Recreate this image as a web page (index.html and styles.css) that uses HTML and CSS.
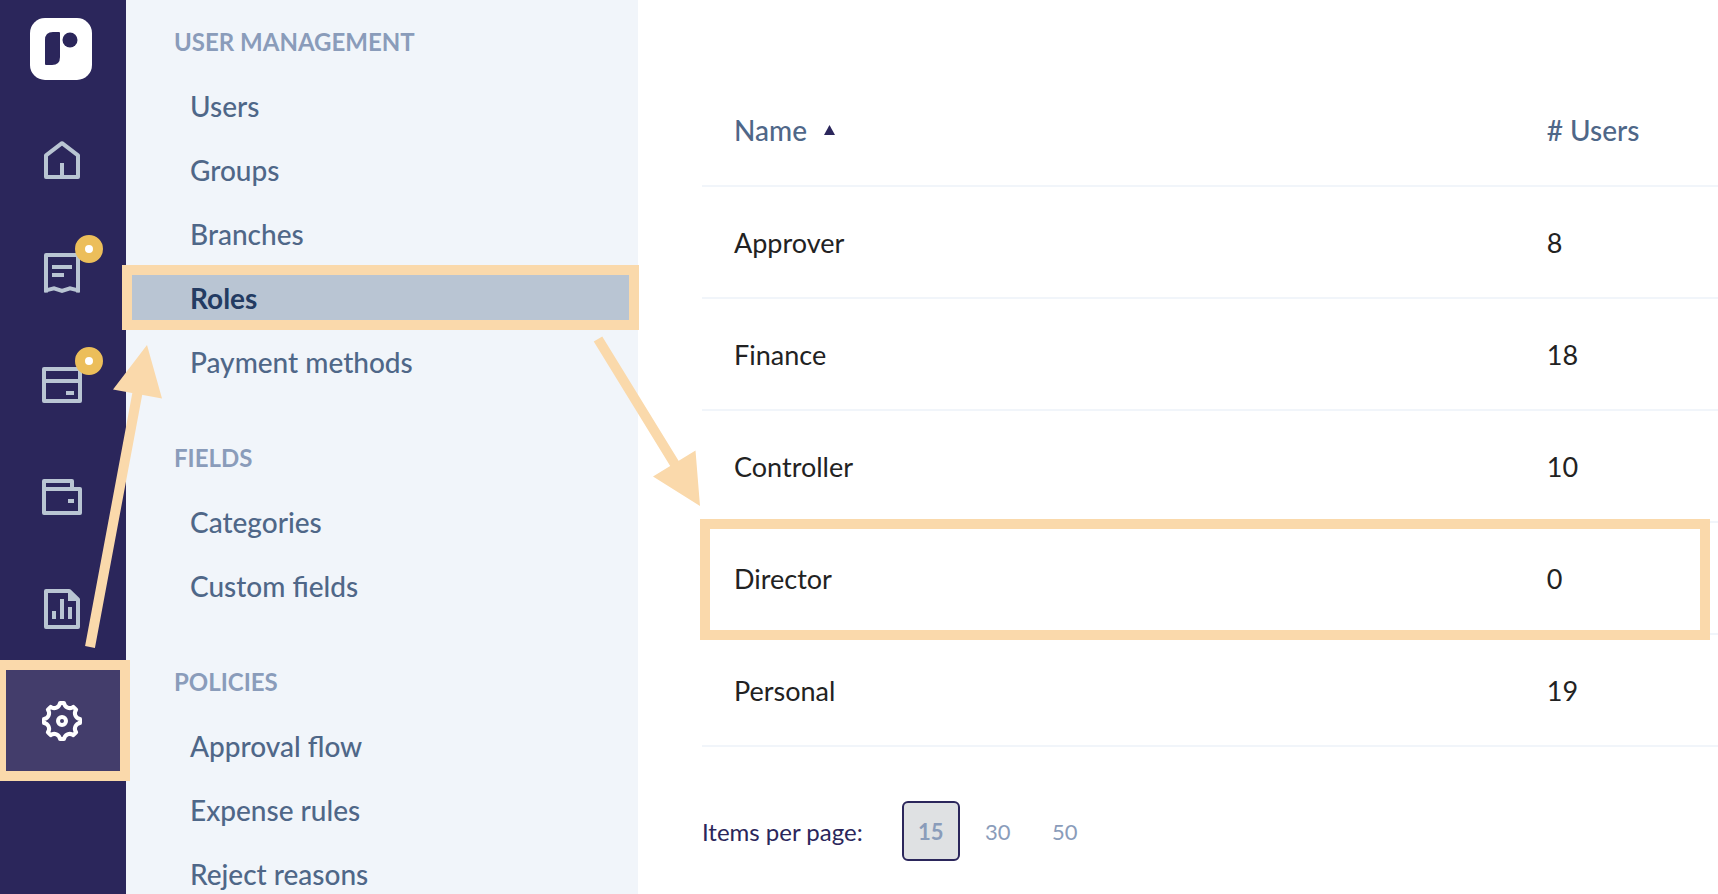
FILE: index.html
```html
<!DOCTYPE html>
<html lang="en">
<head>
  <meta charset="UTF-8" />
  <meta name="viewport" content="width=device-width, initial-scale=1.0" />
  <title>Roles</title>
  <link rel="stylesheet" href="styles.css">
</head>
<body>
  <nav class="rail" aria-label="Main">
    <a class="logo" href="#" aria-label="Home page">
      <svg width="62" height="62" viewBox="0 0 62 62">
        <rect width="62" height="62" rx="15" fill="#fff"/>
        <path d="M23 14h6q1 0 1 1v24q0 8-8 8h-6q-1 0-1-1V22q0-8 8-8z" fill="#2b265b"/>
        <circle cx="40" cy="22" r="7.5" fill="#2b265b"/>
      </svg>
    </a>
    <a class="rail-link" href="#" aria-label="Home">
      <svg class="icon" viewBox="0 0 24 24">
        <path d="M4 9.2L12 3.1l8 6.1V20H4zM12 13v7"/>
      </svg>
    </a>
    <a class="rail-link" href="#" aria-label="Expenses">
      <svg class="icon sharp" viewBox="0 0 24 24">
        <path d="M4 21.8V3h16v18.8" stroke-linejoin="round"/>
        <path d="M3.4 20.8L8 19.7l4 1.3 4-1.3 4.6 1.1M7 9h10M7 13h6"/>
      </svg>
      <span class="badge"></span>
    </a>
    <a class="rail-link" href="#" aria-label="Cards">
      <svg class="icon" viewBox="0 0 24 24">
        <path d="M3 4h18v16H3zM3 10h18M14 16h4"/>
      </svg>
      <span class="badge"></span>
    </a>
    <a class="rail-link" href="#" aria-label="Wallet">
      <svg class="icon" viewBox="0 0 24 24">
        <path d="M17 8V4H3v16h18V8H3M15 14h3"/>
      </svg>
    </a>
    <a class="rail-link" href="#" aria-label="Reports">
      <svg class="icon" viewBox="0 0 24 24">
        <path d="M4 3h11.6L20 7.2V21H4zM8 13v4M12 7v10M16 11v6"/>
        <path class="solid" d="M15 3v5h5.5z"/>
      </svg>
    </a>
    <a class="rail-link active" href="#" aria-label="Settings">
      <svg class="icon" viewBox="0 0 24 24">
        <path d="M11 3h2A2.9 2.9 0 0 0 17.66 4.93L19.07 6.34A2.9 2.9 0 0 0 21 11v2A2.9 2.9 0 0 0 19.07 17.66L17.66 19.07A2.9 2.9 0 0 0 13 21h-2A2.9 2.9 0 0 0 6.34 19.07L4.93 17.66A2.9 2.9 0 0 0 3 13v-2A2.9 2.9 0 0 0 4.93 6.34L6.34 4.93A2.9 2.9 0 0 0 11 3z"/>
        <circle cx="12" cy="12" r="2"/>
      </svg>
    </a>
  </nav>

  <aside class="menu">
    <section>
      <h2>USER MANAGEMENT</h2>
      <a href="#">Users</a>
      <a href="#">Groups</a>
      <a href="#">Branches</a>
      <a class="active" href="#">Roles</a>
      <a href="#">Payment methods</a>
    </section>
    <section>
      <h2>FIELDS</h2>
      <a href="#">Categories</a>
      <a href="#">Custom fields</a>
    </section>
    <section>
      <h2>POLICIES</h2>
      <a href="#">Approval flow</a>
      <a href="#">Expense rules</a>
      <a href="#">Reject reasons</a>
    </section>
  </aside>

  <main class="content">
    <table class="roles">
      <thead>
        <tr>
          <th class="name"><button class="sort" type="button">Name
            <svg width="11" height="10" viewBox="0 0 11 10"><path d="M5.5 0L11 10H0z" fill="#2b265b"/></svg>
          </button></th>
          <th># Users</th>
        </tr>
      </thead>
      <tbody>
        <tr><td>Approver</td><td>8</td></tr>
        <tr><td>Finance</td><td>18</td></tr>
        <tr><td>Controller</td><td>10</td></tr>
        <tr class="marked"><td>Director</td><td>0</td></tr>
        <tr><td>Personal</td><td>19</td></tr>
      </tbody>
    </table>
    <div class="pager">
      <span class="pager-label">Items per page:</span>
      <button class="current" type="button">15</button>
      <button type="button">30</button>
      <button type="button">50</button>
    </div>
  </main>

  <!-- arrows: settings -> roles -> director -->
  <svg class="arrows" width="720" height="660" viewBox="0 0 720 660">
    <path d="M90 647L138 390M598 339L676 466" stroke="#fad9ab" stroke-width="10"/>
    <path d="M147 345L113 389.500L162 398.500zM700 506L653 476.500L695.500 450.500z" fill="#fad9ab"/>
  </svg>
</body>
</html>
```
FILE: styles.css
```css
* {
  box-sizing: border-box;
}
body {
  margin: 0;
  height: 100vh;
  display: flex;
  position: relative;
  overflow: hidden;
  background: #fff;
  font-family: Lato, "Open Sans", sans-serif;
  font-size: 28px;
  color: #222;
}
a {
  color: inherit;
  text-decoration: none;
}
button {
  font: inherit;
  color: inherit;
  background: none;
  border: 0;
  padding: 0;
  cursor: pointer;
}

/* icon rail */
.rail {
  flex: none;
  width: 126px;
  background: #2b265b;
}
.logo {
  display: block;
  height: 105px;
  padding: 18px 0 0 30px;
}
.rail-link {
  position: relative;
  display: flex;
  align-items: center;
  height: 112px;
  padding-left: 38px;
}
.icon {
  width: 48px;
  height: 48px;
  fill: none;
  stroke: #b9c5d3;
  stroke-width: 2;
  stroke-linejoin: round;
}
.icon.sharp {
  stroke-linejoin: miter;
}
.icon .solid {
  fill: #b9c5d3;
  stroke: none;
}
.rail-link.active {
  background: #433d6b;
}
.rail-link.active .icon {
  stroke: #fff;
}
.badge {
  position: absolute;
  left: 75px;
  top: 18px;
  width: 28px;
  height: 28px;
  border: 10px solid #ecbe5a;
  border-radius: 50%;
  background: #fff;
}

/* settings menu */
.menu {
  flex: none;
  width: 512px;
  padding-top: 10px;
  background: #f1f5fa;
  color: #4f6788;
  line-height: 64px;
  font-weight: 500;
}
.menu section {
  margin-bottom: 32px;
}
.menu h2 {
  margin: 0;
  padding-left: 48px;
  font-size: 24px;
  font-weight: 700;
  color: #8a9cba;
}
.menu a {
  position: relative;
  display: block;
  padding-left: 64px;
}
.menu a.active {
  background: #b9c5d3;
  color: #233b62;
  font-weight: 700;
}

/* highlight frames */
.rail-link.active::after,
.menu a.active::after,
.marked td:first-child::after {
  content: "";
  position: absolute;
  z-index: 1;
  border: 10px solid #fad9ab;
}
.rail-link.active::after {
  inset: -5px -4px -4px -4px;
}
.menu a.active::after {
  inset: -1px -1px 0 -4px;
}
.marked td:first-child::after {
  inset: -4px 8px -5px -2px;
}
.arrows {
  position: absolute;
  left: 0;
  top: 0;
  z-index: 2;
  pointer-events: none;
}

/* roles table */
.content {
  flex: 1;
  padding: 75px 0 0 64px;
}
.roles {
  width: 100%;
  border-collapse: separate;
  border-spacing: 0;
  table-layout: fixed;
}
.roles th,
.roles td {
  height: 112px;
  padding: 0 0 0 32px;
  border-bottom: 2px solid #f1f5fa;
  text-align: left;
}
.roles th {
  color: #4f6788;
  font-weight: 500;
}
.roles td {
  font-size: 27px;
}
.roles .name {
  width: 80%;
}
.marked {
  position: relative;
}
.sort {
  display: flex;
  align-items: center;
  gap: 17px;
}

.pager {
  display: flex;
  align-items: center;
  gap: 9px;
  margin-top: 54px;
  font-size: 24px;
  color: #2b265b;
}
.pager-label {
  margin-right: 30px;
}
.pager button {
  width: 58px;
  height: 60px;
  font-size: 22px;
  color: #8a9cba;
}
.pager .current {
  border: 2px solid #2b265b;
  border-radius: 6px;
  background: #dfe1e3;
  font-weight: 700;
}
```
